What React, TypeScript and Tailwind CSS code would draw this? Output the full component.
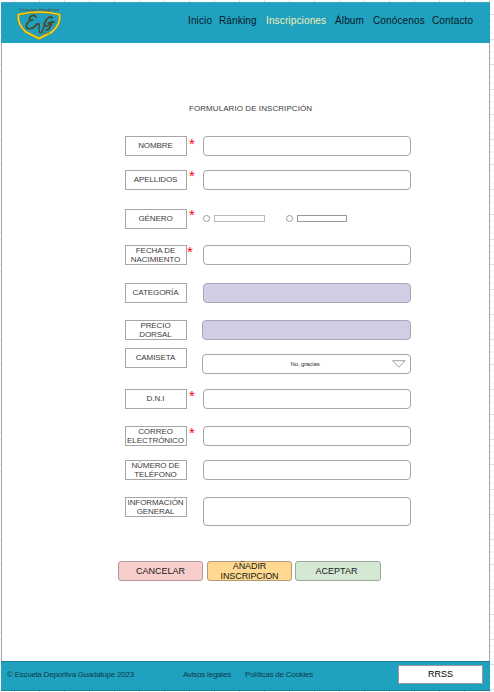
import React from "react";

type Field = {
  label: string[];
  row: string;
  field?: string;
  star?: string;
  kind?: "text" | "locked" | "radio" | "select";
};

const fields: Field[] = [
  { label: ["NOMBRE"], row: "h-[34px]", star: "ml-[2px] -mt-px", field: "h-5 w-[208px]" },
  { label: ["APELLIDOS"], row: "h-[39px]", star: "ml-[2px] -mt-[3px]", field: "h-5 w-[208px]" },
  { label: ["GÉNERO"], row: "h-[36px]", star: "ml-[2px] -mt-[3px]", kind: "radio" },
  { label: ["FECHA DE", "NACIMIENTO"], row: "h-[38px]", star: "-mt-[2px]", field: "h-5 w-[208px]" },
  { label: ["CATEGORÍA"], row: "h-[37px]", kind: "locked", field: "h-5 w-[208px]" },
  { label: ["PRECIO", "DORSAL"], row: "h-[28px]", kind: "locked", field: "h-5 w-[209px] -ml-px" },
  { label: ["CAMISETA"], row: "h-[41px]", kind: "select", field: "h-5 w-[209px] -ml-px mt-[6px]" },
  { label: ["D.N.I"], row: "h-[37px]", star: "ml-[2px] -mt-[2px]", field: "h-5 w-[208px]" },
  { label: ["CORREO", "ELECTRÓNICO"], row: "h-[34px]", star: "ml-[2px] -mt-[2px]", field: "h-5 w-[208px]" },
  { label: ["NÚMERO DE", "TELÉFONO"], row: "h-[37px]", field: "h-5 w-[208px]" },
  { label: ["INFORMACIÓN", "GENERAL"], row: "h-[64px]", field: "h-[29px] w-[208px]" },
];

function Crest() {
  return (
    <svg className="ml-[14px] mt-[4px] h-[33px] w-[49px]" viewBox="0 0 49 33">
      <path
        d="M3.5 7.5 Q24 2.5 44.5 7.5 Q46 17 37 25 Q31 28 24 31.5 Q17 28 11 25 Q2 17 3.5 7.5Z"
        fill="#239fbe"
        stroke="#7e8a35"
        strokeWidth="2.8"
      />
      <path
        d="M3.5 7.5 Q24 2.5 44.5 7.5 Q46 17 37 25 Q31 28 24 31.5 Q17 28 11 25 Q2 17 3.5 7.5Z"
        fill="none"
        stroke="#f5d51e"
        strokeWidth="1.7"
      />
      <text x="24.5" y="4" textAnchor="middle" fontSize="4.4" textLength="40" fill="#4b4b45" fontFamily="Liberation Sans, sans-serif">
        Deportiva Guadalupe
      </text>
      <g fill="none" stroke="#4b4526" strokeLinecap="round" strokeWidth="1.7">
        <path d="M21 10 C19 7 14 9 14.5 12 C15 14 18 13 18 13 C13 13 9 20 13 21.5 C16 22.5 20 20 22 17" />
        <path d="M22 18 C24 15 25 17 24 21 C24 27 26 28 28 22 C29 19 29 18 30 18" strokeWidth="1.3" />
        <path d="M37 11 C36 8 32 11 30 15 C28 19 31 21 35 17 L37 14 C36 20 34 23 31 23 M33 16 L39 15" />
      </g>
      <path d="M27 26 L34 26" stroke="#6a6a3d" strokeWidth="1" strokeDasharray="1.5 .5" />
    </svg>
  );
}

function Control({ item }: { item: Field }) {
  if (item.kind === "radio") {
    return (
      <div className="mt-[6px] flex h-[7px] items-center">
        <span className="h-[7px] w-[7px] rounded-full border border-[#999]" />
        <span className="ml-[4px] h-[7px] w-[51px] border border-[#bbb]" />
        <span className="ml-[21px] h-[7px] w-[7px] rounded-full border border-[#999]" />
        <span className="ml-[4px] h-[7px] w-[50px] border border-[#999]" />
      </div>
    );
  }
  const tone = item.kind === "locked" ? "border-[#aaa6bd] bg-[#d0cee2]" : "border-[#a6a6a6] bg-white";
  return (
    <div className={`flex items-center rounded-[4px] border ${tone} ${item.field}`}>
      {item.kind === "select" && (
        <>
          <span className="w-[205px] pr-px pb-px text-center text-[6px] leading-none tracking-[-0.12px] text-[#333]">No, gracias</span>
          <svg className="-ml-[16px] h-[8px] w-[14px] shrink-0" viewBox="0 0 14 8">
            <path d="M.5 .7H13L6.8 7.2Z" fill="white" stroke="#888" strokeWidth=".8" />
          </svg>
        </>
      )}
    </div>
  );
}

export default function App() {
  return (
    <div className="h-[692px] w-[494px] overflow-hidden bg-white bg-[linear-gradient(#dedede_1px,transparent_1px),linear-gradient(90deg,#dedede_1px,transparent_1px),linear-gradient(#f0f0f0_1px,transparent_1px)] bg-[size:25px_25px,25px_25px,6.25px_6.25px] bg-[position:0_14px,14px_0,0_1.5px] pl-px pt-[2px] font-['Liberation_Sans',Arial,sans-serif]">
      <div className="flex h-[689px] w-[489px] flex-col border-r border-l border-[#a5a5a5] bg-white">
        <header className="-mx-px flex h-[41px] shrink-0 border-t border-[#46a7c0] bg-[#21a1c0]">
          <Crest />
          <nav className="ml-[123px] mt-[12px] flex h-[12px] items-start whitespace-nowrap pl-px text-[10px] leading-[12px] tracking-[0.14px] text-[#06181e]">
            <a className="w-[31px]">Inicio</a>
            <a className="w-[47px]">Ránking</a>
            <a className="w-[69px] text-[#f4efac]">Inscripciones</a>
            <a className="w-[38px]">Álbum</a>
            <a className="w-[59px]">Conócenos</a>
            <a>Contacto</a>
          </nav>
        </header>

        <main className="flex-1">
          <h1 className="ml-[187px] mt-[61px] h-[32px] whitespace-nowrap text-[8px] leading-[10px] tracking-[0.07px] text-[#3d3d3d]">
            FORMULARIO DE INSCRIPCIÓN
          </h1>
          <form className="ml-[123px]">
            {fields.map((item) => (
              <div key={item.label.join(" ")} className={`flex items-start ${item.row}`}>
                <div
                  className={`flex h-5 w-[62px] shrink-0 flex-col items-center justify-center whitespace-nowrap border border-[#a6a6a6] pr-px text-center text-[8px] leading-[9px] tracking-[-0.08px] text-[#3d3d3d] ${item.label.length === 1 ? "pb-[2px]" : ""}`}
                >
                  {item.label.map((line) => (
                    <span key={line}>{line}</span>
                  ))}
                </div>
                <div className="w-[16px] shrink-0">
                  {item.star && (
                    <span className={`block text-[15px] leading-[17px] text-[#ff0000] ${item.star}`}>*</span>
                  )}
                </div>
                <Control item={item} />
              </div>
            ))}
          </form>
          <div className="ml-[116px] flex gap-[4px] text-[9px] leading-[10px] text-[#161616]">
            <button className="h-5 w-[85px] rounded-[3px] border border-[#b09a9a] bg-[#f8cecc]">CANCELAR</button>
            <button className="flex h-5 w-[85px] flex-col items-center justify-center rounded-[3px] border border-[#b09a78] bg-[#ffd98f] tracking-[-0.1px]">
              <span>AÑADIR</span>
              <span>INSCRIPCION</span>
            </button>
            <button className="-ml-px h-5 w-[86px] rounded-[3px] border border-[#9aaa9a] bg-[#d5e8d4] pr-[3px]">ACEPTAR</button>
          </div>
        </main>

        <footer className="-mx-px flex h-[30px] shrink-0 items-start border-t border-b border-[#168099] bg-[#21a1c0] text-[8px] leading-[10px] tracking-[-0.22px] text-[#0b3c48]">
          <span className="ml-[6px] mt-[8px] w-[176px] whitespace-nowrap">© Escuela Deportiva Guadalupe 2023</span>
          <span className="mt-[8px] w-[62px] whitespace-nowrap">Avisos legales</span>
          <span className="mt-[8px] w-[153px] whitespace-nowrap">Políticas de Cookies</span>
          <span className="mt-[3px] flex h-[19px] w-[85px] items-center justify-center border border-[#999] bg-white pb-[2px] text-[9px] tracking-normal text-black">
            RRSS
          </span>
        </footer>
      </div>
    </div>
  );
}
